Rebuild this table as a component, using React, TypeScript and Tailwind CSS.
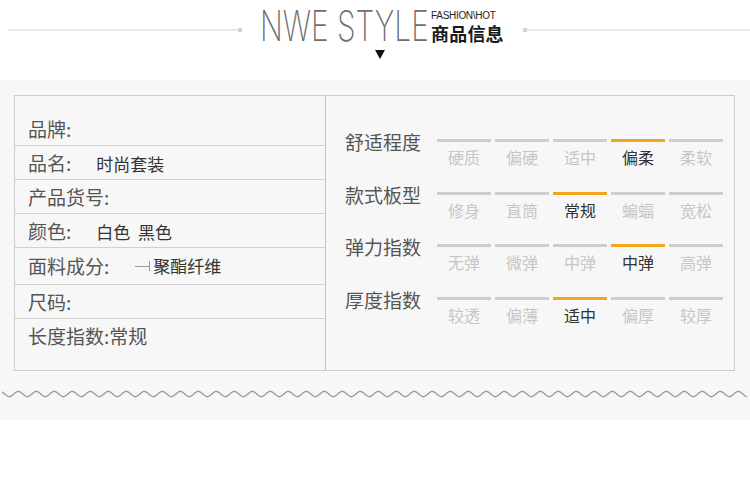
import React from "react";

const CJK = "font-['Noto_Sans_CJK_SC','Noto_Sans',sans-serif]";

const basicInfo: { label: string; value?: string; lead?: boolean }[] = [
  { label: "品牌:" },
  { label: "品名:", value: "时尚套装" },
  { label: "产品货号:" },
  { label: "颜色:", value: "白色\u00a0\u00a0黑色" },
  { label: "面料成分:", value: "聚酯纤维", lead: true },
  { label: "尺码:" },
  { label: "长度指数:常规" },
];

const rowClasses = [
  "h-[50px] items-end pb-[4px] border-b",
  "h-[34px] items-center border-b",
  "h-[34px] items-center border-b",
  "h-[34px] items-center border-b",
  "h-[37px] items-center border-b",
  "h-[34px] items-center border-b",
  "flex-1 items-start pt-[5px]",
];

const scales = [
  { label: "舒适程度", options: ["硬质", "偏硬", "适中", "偏柔", "柔软"], active: 3 },
  { label: "款式板型", options: ["修身", "直筒", "常规", "蝙蝠", "宽松"], active: 2 },
  { label: "弹力指数", options: ["无弹", "微弹", "中弹", "中弹", "高弹"], active: 3 },
  { label: "厚度指数", options: ["较透", "偏薄", "适中", "偏厚", "较厚"], active: 2 },
];

const rowHeights = ["h-[53px]", "h-[52px]", "h-[53px]", "h-[53px]"];

// wave under the box
function Wave() {
  let d = "M3 394";
  for (let x = 3; x < 748; x += 1) {
    const y = 394 - 2.6 * Math.sin(((x - 13.8) / 18) * Math.PI * 2);
    d += ` L${x} ${y.toFixed(2)}`;
  }
  return (
    <svg width="750" height="10" viewBox="0 389 750 10" className="block">
      <path d={d} fill="none" stroke="#9a9a9a" strokeWidth="1.3" />
    </svg>
  );
}

export default function App() {
  return (
    <main className={`w-[750px] h-[479px] bg-white overflow-hidden ${CJK}`}>
      {/* ─── Header ─── */}
      <header className="h-[80px] flex flex-col">
        <div className="flex items-start pt-[7px]">
          <div className="ml-[8px] mt-[22px] h-[2px] w-[230px] bg-[#e8e8e8]" />
          <div className="mt-[21px] h-[4px] w-[4px] bg-[#d4d4d4]" />
          <div className="ml-[18px] w-[244px] flex items-start">
            <div className="w-[171px] h-[36px] overflow-visible">
              <span className="block origin-left scale-x-[0.71] whitespace-nowrap font-['Inter',sans-serif] font-extralight text-[42px] leading-[38px] text-[#6e6e6e]">
                NWE STYLE
              </span>
            </div>
            <div className="flex flex-col pt-[4px]">
              <span className="font-['Liberation_Sans',sans-serif] text-[10px] leading-[10px] tracking-[-0.3px] text-[#222]">
                FASHION\HOT
              </span>
              <span className="mt-[2px] font-bold text-[18px] leading-[20px] tracking-[0.2px] text-[#1a1a1a]">
                商品信息
              </span>
            </div>
          </div>
          <div className="ml-[19px] mt-[21px] h-[4px] w-[4px] bg-[#d4d4d4]" />
          <div className="mt-[22px] h-[2px] flex-1 bg-[#e8e8e8]" />
        </div>
        <div className="pl-[375px] pt-[7px]">
          <div className="w-0 h-0 border-x-[5px] border-x-transparent border-t-[9px] border-t-[#111]" />
        </div>
      </header>

      {/* ─── Info band ─── */}
      <section className="h-[340px] bg-[#f7f7f7] pt-[15px]">
        <div className="ml-[14px] mr-[15px] h-[276px] border border-[#cbcbcb] flex">
          <div className="w-[311px] border-r border-[#c4c4c4] flex flex-col">
            {basicInfo.map((item, i) => (
              <div key={i} className={`flex pl-[13px] border-[#d0d0d0] ${rowClasses[i]}`}>
                <span className="text-[19px] leading-[24px] text-[#555]">{item.label}</span>
                {item.value && (
                  <span
                    className={`flex items-center text-[17px] leading-[24px] text-[#333] ${
                      item.lead ? "ml-[26px]" : "ml-[25px] mt-[3px]"
                    }`}
                  >
                    {item.lead && (
                      <span className="flex items-center mr-[3px]">
                        <span className="w-[14px] h-px bg-[#999]" />
                        <span className="w-px h-[10px] bg-[#999]" />
                      </span>
                    )}
                    {item.value}
                  </span>
                )}
              </div>
            ))}
          </div>

          <div className="flex-1 pl-[19px] pt-[32px] flex flex-col">
            {scales.map((s, i) => (
              <div key={s.label} className={`flex items-start ${rowHeights[i]}`}>
                <span className="w-[92px] text-[19px] leading-[28px] text-[#555]">{s.label}</span>
                <div className="flex gap-[4px]">
                  {s.options.map((opt, j) => (
                    <div key={j} className="w-[54px] flex flex-col items-center pt-[11px]">
                      <div className={`w-full h-[3px] ${j === s.active ? "bg-[#f4a51c]" : "bg-[#cdcdcd]"}`} />
                      <span
                        className={`mt-[4px] text-[16px] leading-[22px] ${
                          j === s.active ? "text-[#333]" : "text-[#c6c6c6]"
                        }`}
                      >
                        {opt}
                      </span>
                    </div>
                  ))}
                </div>
              </div>
            ))}
          </div>
        </div>
        <div className="mt-[18px]">
          <Wave />
        </div>
      </section>
    </main>
  );
}
